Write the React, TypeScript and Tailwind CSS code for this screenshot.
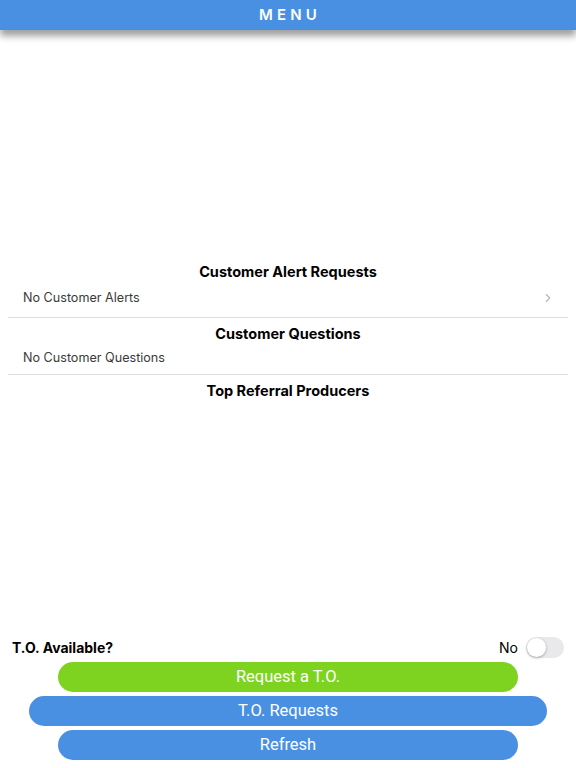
import { ChevronRight } from 'lucide-react';

const font = { fontFamily: 'Inter, "Noto Sans", sans-serif' };
const btnFont = { fontFamily: 'Roboto, "Noto Sans", sans-serif' };

function Divider() {
  return <div className="mx-2 h-px bg-[#dedede]" />;
}

export default function App() {
  return (
    <div className="flex h-screen w-full flex-col bg-white" style={font}>
      {/* Header */}
      <div className="relative z-10 flex h-[30px] shrink-0 items-center justify-center bg-[#4a90e2] shadow-[0_6px_7px_rgba(0,0,0,0.38)]">
        <span className="pl-[4px] text-[15px] font-semibold tracking-[0.28em] text-white">MENU</span>
      </div>

      {/* Sections */}
      <div className="flex-1 pt-[232px]">
        <div className="flex h-[20px] items-center justify-center text-[14.5px] font-bold text-black">
          Customer Alert Requests
        </div>
        <div className="mx-2 flex items-center justify-between pt-[7px] pb-[10px] pl-[15px] pr-[13px] leading-[18px]">
          <span className="text-[12.6px] text-[#3a3a3a]">No Customer Alerts</span>
          <ChevronRight className="h-[14px] w-[14px] text-[#b8b8bd]" strokeWidth={2} />
        </div>
        <Divider />

        <div className="mt-[6px] flex h-[20px] items-center justify-center text-[14.5px] font-bold text-black">
          Customer Questions
        </div>
        <div className="mx-2 flex items-center pt-[5px] pb-[7px] pl-[15px] leading-[18px]">
          <span className="text-[12.6px] text-[#3a3a3a]">No Customer Questions</span>
        </div>
        <Divider />

        <div className="mt-[6px] flex h-[20px] items-center justify-center text-[14.5px] font-bold text-black">
          Top Referral Producers
        </div>
      </div>

      {/* Bottom controls */}
      <div className="shrink-0 pb-[8px]">
        <div className="flex h-[22px] items-center justify-between pl-[12px] pr-[12px]">
          <span className="text-[14px] font-bold text-black">T.O. Available?</span>
          <div className="flex items-center gap-[8px]">
            <span className="text-[14px] text-black">No</span>
            <div className="relative h-[21px] w-[38px] rounded-full bg-[#e9e9eb]">
              <div className="absolute left-[1px] top-[1px] h-[19px] w-[19px] rounded-full bg-white shadow-[0_1px_3px_rgba(0,0,0,0.3)]" />
            </div>
          </div>
        </div>
        <div className="mt-[4px] flex flex-col gap-[4px]" style={btnFont}>
          <button className="mx-[58px] h-[30px] rounded-full bg-[#7ed321] text-[16.5px] font-normal text-white">
            Request a T.O.
          </button>
          <button className="mx-[29px] h-[30px] rounded-full bg-[#4a90e2] text-[16.5px] font-normal text-white">
            T.O. Requests
          </button>
          <button className="mx-[58px] h-[30px] rounded-full bg-[#4a90e2] text-[16.5px] font-normal text-white">
            Refresh
          </button>
        </div>
      </div>
    </div>
  );
}
